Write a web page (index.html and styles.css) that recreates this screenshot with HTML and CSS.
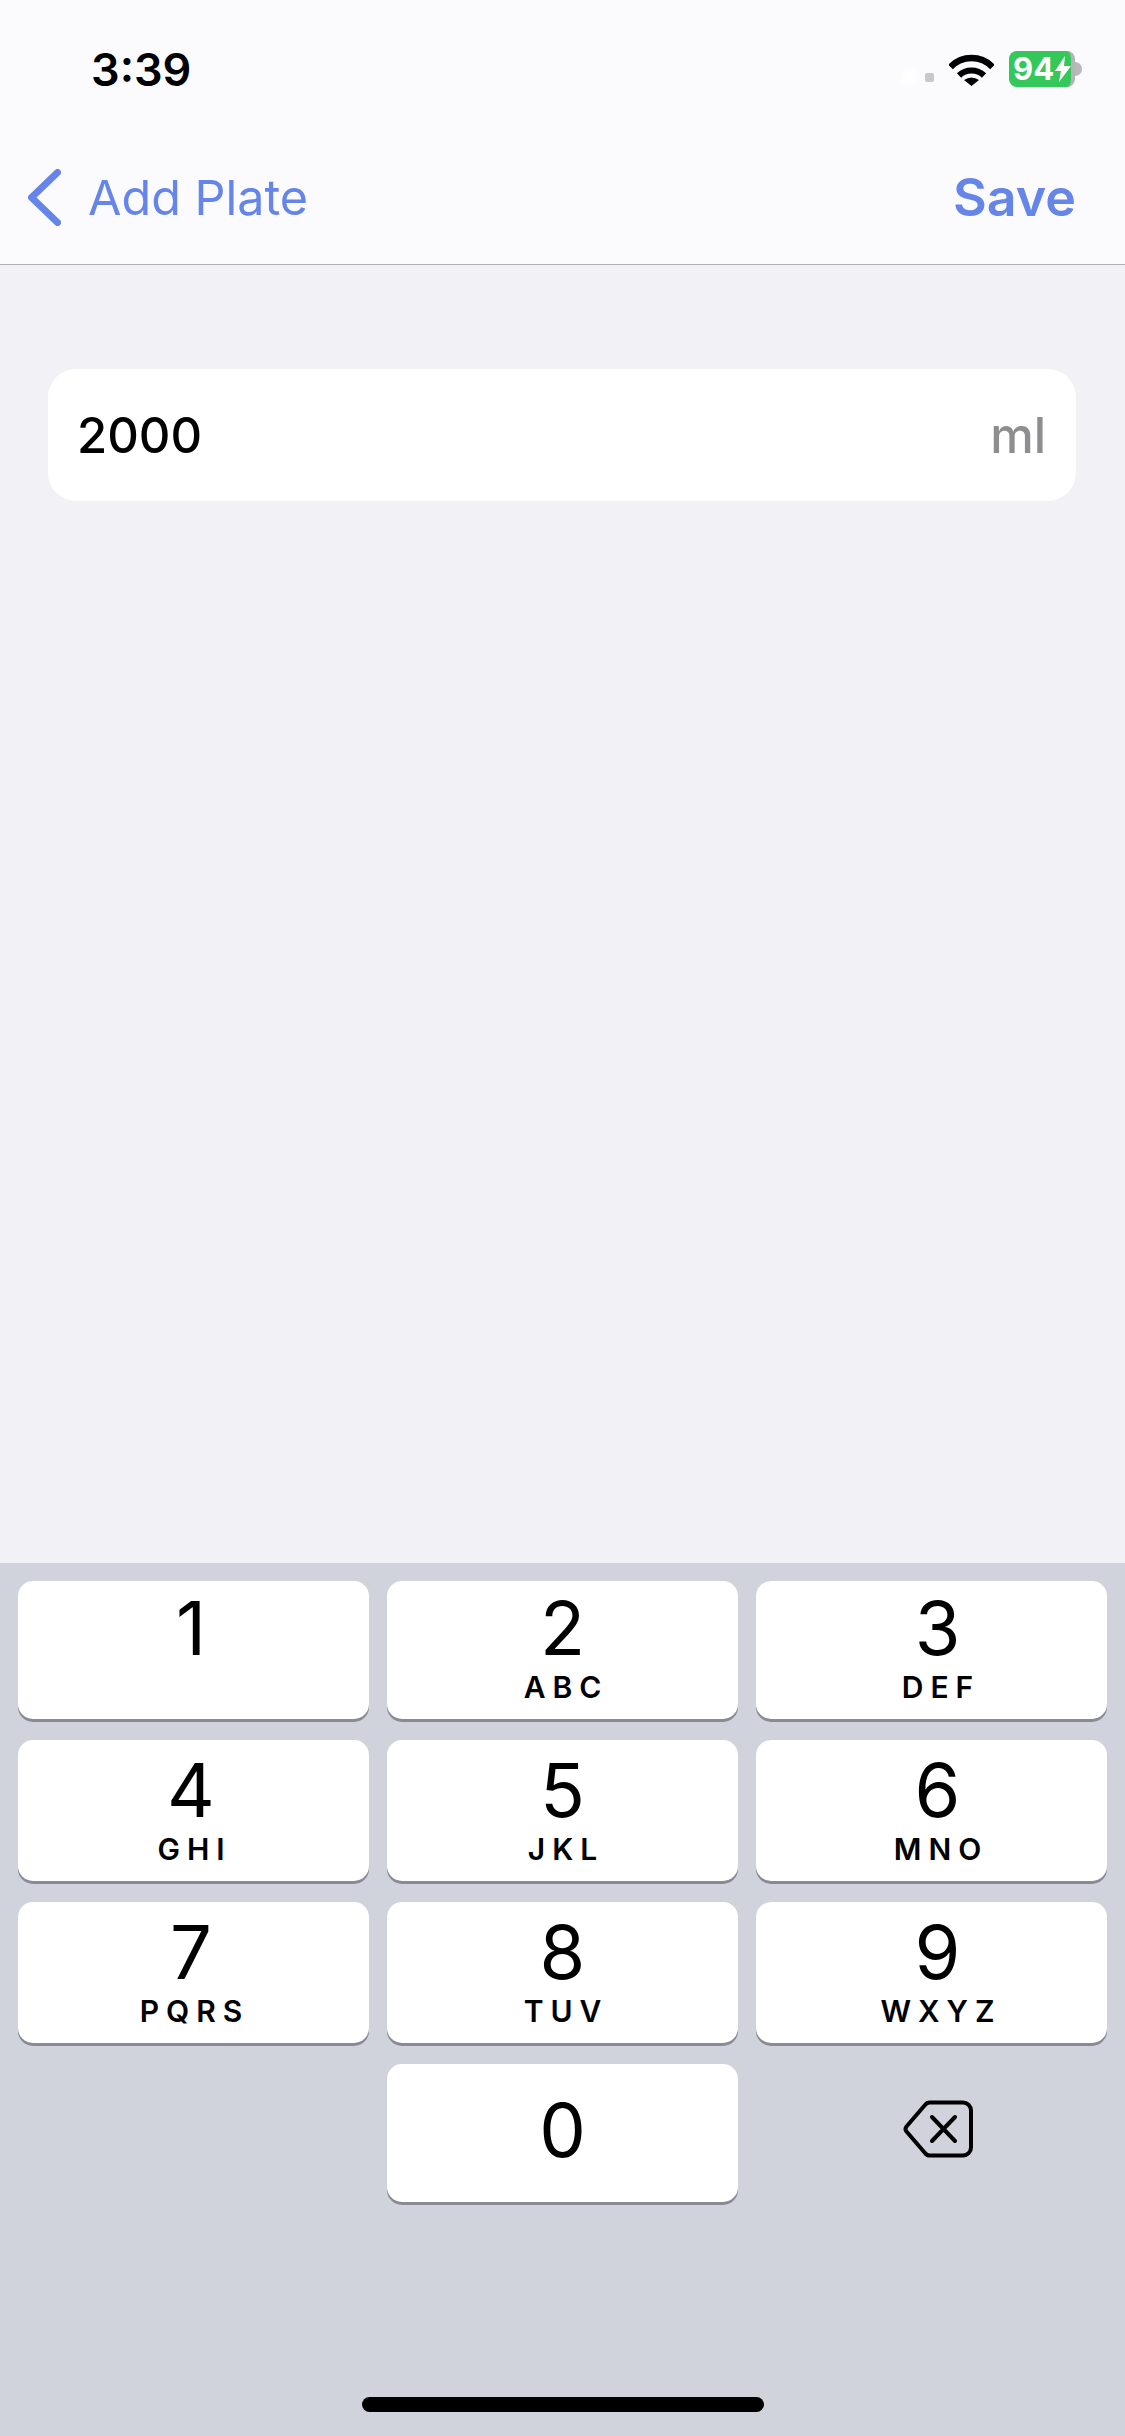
FILE: index.html
```html
<!DOCTYPE html>
<html lang="en">
<head>
    <meta charset="UTF-8">
    <meta name="viewport" content="width=device-width, initial-scale=1.0">
    <title>Add Plate</title>
    <link rel="stylesheet" href="styles.css">
</head>
<body>
    <div class="page">
        <header class="top-bar">
            <div class="status-bar">
                <span class="time">3:39</span>
                <div class="status-icons">
                    <span class="mic-dot"></span>
                    <svg class="wifi" viewBox="0 0 45 33" fill="none" stroke="#000">
                        <path d="M1.5 14 A29 29 0 0 1 43.5 14" stroke-width="6.5"/>
                        <path d="M10 22.5 A18 18 0 0 1 35 22.5" stroke-width="6"/>
                        <path d="M15 27 Q22.5 22 30 27 L22.5 33 Z" fill="#000" stroke="none"/>
                    </svg>
                    <div class="battery">
                        <span class="battery-level">94</span>
                        <svg class="bolt" viewBox="0 0 16 26"><path d="M10 0 L0 15 H6 L4 26 L16 10 H9 Z" fill="#fff"/></svg>
                    </div>
                    <span class="battery-nub"></span>
                </div>
            </div>
            <nav class="nav-bar">
                <a class="back-link">
                    <svg class="chevron" viewBox="0 0 33 57" fill="none" stroke="#6685e8" stroke-width="7" stroke-linecap="round" stroke-linejoin="round">
                        <path d="M29.5 3.5 L3.5 28.5 L29.5 53.5"/>
                    </svg>
                    <span>Add Plate</span>
                </a>
                <a class="save-link">Save</a>
            </nav>
        </header>

        <main class="content">
            <div class="amount-field">
                <span class="amount-value">2000</span>
                <span class="amount-unit">ml</span>
            </div>
        </main>

        <section class="keyboard">
            <div class="key-grid">
                <div class="key"><span class="digit">1</span></div>
                <div class="key"><span class="digit">2</span><span class="letters">ABC</span></div>
                <div class="key"><span class="digit">3</span><span class="letters">DEF</span></div>
                <div class="key key-mid"><span class="digit">4</span><span class="letters">GHI</span></div>
                <div class="key key-mid"><span class="digit">5</span><span class="letters">JKL</span></div>
                <div class="key key-mid"><span class="digit">6</span><span class="letters">MNO</span></div>
                <div class="key key-mid"><span class="digit">7</span><span class="letters">PQRS</span></div>
                <div class="key key-mid"><span class="digit">8</span><span class="letters">TUV</span></div>
                <div class="key key-mid"><span class="digit">9</span><span class="letters">WXYZ</span></div>
                <div class="key-blank"></div>
                <div class="key key-zero"><span class="digit">0</span></div>
                <div class="key-blank key-delete">
                    <svg class="delete-icon" viewBox="0 0 70 58" fill="none" stroke="#000" stroke-width="4" stroke-linecap="round" stroke-linejoin="round">
                        <path d="M27 2.5 H60 a8 8 0 0 1 8 8 V47.5 a8 8 0 0 1 -8 8 H27 a6 6 0 0 1 -5 -2.5 L3.5 31.5 a4 4 0 0 1 0 -5 L22 5 a6 6 0 0 1 5 -2.5 Z"/>
                        <path d="M29 17 L52 41 M52 17 L29 41"/>
                    </svg>
                </div>
            </div>
            <div class="home-indicator"></div>
        </section>
    </div>
</body>
</html>
```
FILE: styles.css
```css
* {
    box-sizing: border-box;
}
body {
    margin: 0;
    font-family: Inter, "Liberation Sans", sans-serif;
    color: #000;
    background-color: #f1f1f6;
}
.page {
    width: 1125px;
    height: 2436px;
    display: flex;
    flex-direction: column;
    overflow: hidden;
}

/* status bar + nav */
.top-bar {
    height: 265px;
    background-color: #fbfbfd;
    border-bottom: 1px solid #b0b0b2;
}
.status-bar {
    height: 138px;
    padding: 0 43px 0 91px;
    display: flex;
    align-items: center;
    justify-content: space-between;
}
.time {
    font-size: 45px;
    font-weight: 600;
}
.status-icons {
    display: flex;
    align-items: center;
}
.mic-dot {
    width: 9px;
    height: 9px;
    margin: 16px 15px 0 0;
    border-radius: 2px;
    background-color: #c8c8ca;
    box-shadow: -20px 0 6px 3px #fff;
}
.wifi {
    width: 45px;
    height: 33px;
    margin-right: 15px;
}
.battery {
    width: 66px;
    height: 36px;
    padding-left: 4px;
    display: flex;
    align-items: center;
    background-color: #34c759;
    border-right: 4px solid #b4b6b4;
    border-radius: 8px;
}
.battery-level {
    font-size: 31px;
    font-weight: 700;
    line-height: 36px;
    color: #fff;
}
.bolt {
    width: 16px;
    height: 26px;
    margin-left: 1px;
    flex: none;
}
.battery-nub {
    width: 7px;
    height: 14px;
    background-color: #b9b9bb;
    border-radius: 0 7px 7px 0;
}
.nav-bar {
    height: 126px;
    padding: 0 49px 7px 28px;
    display: flex;
    align-items: center;
    justify-content: space-between;
    font-size: 48.5px;
    color: #6685e8;
}
.back-link {
    display: flex;
    align-items: center;
    gap: 27px;
}
.chevron {
    width: 33px;
    height: 57px;
}
.save-link {
    font-size: 52px;
    font-weight: 600;
}

/* form */
.content {
    flex: 1;
    padding: 104px 49px 0 48px;
}
.amount-field {
    height: 132px;
    padding: 0 30px 0 29px;
    display: flex;
    align-items: center;
    justify-content: space-between;
    background-color: #fff;
    border-radius: 28px;
    font-size: 49px;
    font-weight: 450;
}
.amount-unit {
    color: #8e8e90;
}

/* number pad */
.keyboard {
    height: 873px;
    padding: 18px 18px 0;
    display: flex;
    flex-direction: column;
    background-color: #d0d3dc;
}
.key-grid {
    display: grid;
    grid-template-columns: repeat(3, 351px);
    grid-template-rows: 138px 141px 141px 138px;
    column-gap: 18px;
    row-gap: 21px;
}
.key {
    padding-top: 11px;
    display: flex;
    flex-direction: column;
    align-items: center;
    background-color: #fff;
    border-radius: 15px;
    box-shadow: 0 3px 0 #888b93;
}
.key:nth-child(3n+1) {
    padding-right: 5px;
}
.key:nth-child(3n) {
    padding-left: 12px;
}
.key-mid {
    padding-top: 14px;
}
.key-zero {
    padding: 0 0 6px;
    justify-content: center;
}
.digit {
    font-size: 74px;
    line-height: 72px;
}
.letters {
    margin-top: 8px;
    padding-left: 7px;
    font-size: 30px;
    font-weight: 600;
    line-height: 30px;
    letter-spacing: 7px;
}
.key-delete {
    display: flex;
    align-items: center;
    justify-content: center;
    padding: 0 0 8px 12px;
}
.delete-icon {
    width: 70px;
    height: 58px;
}
.home-indicator {
    width: 402px;
    height: 15px;
    margin: 195px 0 0 344px;
    background-color: #000;
    border-radius: 8px;
}
```
